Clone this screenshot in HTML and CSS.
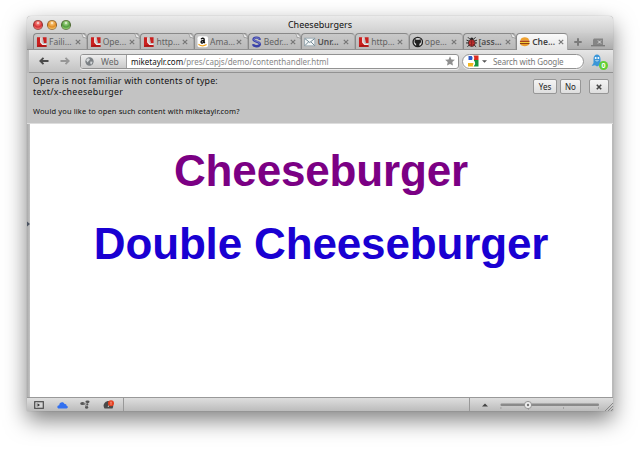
FILE: index.html
```html
<!DOCTYPE html>
<html lang="en">
<head>
<meta charset="utf-8">
<title>Cheeseburgers</title>
<link rel="stylesheet" href="styles.css">
</head>
<body>
<svg width="0" height="0" class="defs">
  <symbol id="opera" viewBox="0 0 12 12"><path fill="#c9201f" d="M1 1h4.300v5l1.500 2.300H11V11H1z"/><path fill="#c9201f" d="M7 1h4v6H8.300z"/><path fill="#f2eeee" d="M4.300 1h1.400v5l1.800 2.200H11v1H6.600L4.300 6.500z"/><path fill="#a81010" d="M1 10l4-1 6 1v1H1z"/></symbol>
  <symbol id="close" viewBox="0 0 6 6"><path d="M.8.8l4.400 4.400M5.200.8L.8 5.200" stroke="#777" stroke-width="1.200"/></symbol>
  <symbol id="curl" viewBox="0 0 6 6"><path d="M.5.500C3 .5 5.500 3 5.500 5.500L3.800 4.500 2.200 4.600 1.800 2.800z" fill="#f3f3f3" stroke="#888" stroke-width=".7"/></symbol>
</svg>
<div class="window">
  <header class="title">
    <div class="lights"><i class="red"></i><i class="amber"></i><i class="green"></i></div>
    <span>Cheeseburgers</span>
  </header>
  <nav class="tabs">
    <div class="tab"><svg class="fav"><use href="#opera"/></svg><span>Faili...</span><svg class="x"><use href="#close"/></svg><svg class="curl"><use href="#curl"/></svg></div>
    <div class="tab"><svg class="fav"><use href="#opera"/></svg><span>Ope...</span><svg class="x"><use href="#close"/></svg><svg class="curl"><use href="#curl"/></svg></div>
    <div class="tab"><svg class="fav"><use href="#opera"/></svg><span>http...</span><svg class="x"><use href="#close"/></svg><svg class="curl"><use href="#curl"/></svg></div>
    <div class="tab"><svg class="fav" viewBox="0 0 12 12"><rect x=".5" width="11" height="11.500" rx="2" fill="#fff"/><path d="M4.300 3.200c.5-1.600 3.200-1.400 3.200.3v2.700l.6.900M7.300 4.400C3 4.400 3.800 7.800 6 7c.8-.3 1.300-1 1.300-2" fill="none" stroke="#111" stroke-width="1.400"/><path d="M1.500 8.300c2.500 2 6 2 8.500.4" fill="none" stroke="#f5a51c" stroke-width="1.300"/></svg><span>Ama...</span><svg class="x"><use href="#close"/></svg><svg class="curl"><use href="#curl"/></svg></div>
    <div class="tab"><svg class="fav" viewBox="0 0 12 12"><path d="M9.200 3.700C9 1 3 .5 2.600 3.300 2.300 6 9.400 5 9.300 8.300 9 11.300 2.500 11 2.300 8.200" fill="none" stroke="#3a42a8" stroke-width="2.400"/><path d="M9 3C8 1.200 3.300 1 3 3.300c0 2.400 6.500 1.700 6.200 4.700" fill="none" stroke="#b5b9ed" stroke-width=".5"/></svg><span>Bedr...</span><svg class="x"><use href="#close"/></svg><svg class="curl"><use href="#curl"/></svg></div>
    <div class="tab"><svg class="fav" viewBox="0 0 12 12"><rect x=".7" y="2" width="10.600" height="8" fill="#f4f7f8" stroke="#8fa1aa" stroke-width=".8"/><path d="M1 2.500l5 4 5-4M1 9.700L4.600 6M11 9.700L7.400 6" fill="none" stroke="#6e858f"/></svg><span class="unread">Unr...</span><svg class="x"><use href="#close"/></svg></div>
    <div class="tab"><svg class="fav"><use href="#opera"/></svg><span>http...</span><svg class="x"><use href="#close"/></svg></div>
    <div class="tab"><svg class="fav" viewBox="0 0 12 12"><circle cx="6" cy="6" r="4.900" fill="#ddd" stroke="#222" stroke-width="1.400"/><path d="M3 2.800l1.500.8h3L9 2.800l.4 2.700c0 1.500-1 2-1.700 2.200V11H4.300V7.700C3.600 7.500 2.600 7 2.600 5.500z" fill="#222"/></svg><span>ope...</span><svg class="x"><use href="#close"/></svg></div>
    <div class="tab"><svg class="fav" viewBox="0 0 12 12"><path d="M2 1l2 2M10 1L8 3M.5 4L3 5M11.500 4L9 5M0 7h3M12 7H9M1.500 11l2-2M10.500 11l-2-2" stroke="#222"/><circle cx="6" cy="3" r="1.800" fill="#222"/><ellipse cx="6" cy="7" rx="3.500" ry="3.700" fill="#cf3434" stroke="#222" stroke-width=".7"/><path d="M6 4v6.500M4.300 5.500v1M7.700 5.500v1M4.300 8v1M7.700 8v1" stroke="#411" stroke-width=".7"/></svg><span class="unread">[ass...</span><svg class="x"><use href="#close"/></svg><svg class="curl"><use href="#curl"/></svg></div>
    <div class="tab active"><svg class="fav" viewBox="0 0 12 12"><path d="M1.500 4.600C1.500 0 10.500 0 10.500 4.600z" fill="#eea02e"/><path d="M1 5.300h10" stroke="#a33212" stroke-width="1.300"/><path d="M1 6.500h10" stroke="#f7d22c"/><path d="M1 7.600h10" stroke="#8c3e14" stroke-width="1.200"/><path d="M1.500 8.200h9c0 3-9 3-9 0z" fill="#e99a2b"/></svg><span>Che...</span><svg class="x"><use href="#close"/></svg></div>
    <svg class="plus" viewBox="0 0 8 8"><path d="M4 .3v7.400M.3 4h7.400" stroke="#7b7b7b" stroke-width="2"/></svg>
    <svg class="trash" viewBox="0 0 14 9"><path d="M3 .5h9V7H2V1.500z" fill="#858585"/><path d="M0 7.700h14" stroke="#7b7b7b" stroke-width="1.400"/><path d="M7 2.500l3 3M10 2.500l-3 3" stroke="#ddd"/></svg>
  </nav>
  <div class="toolbar">
    <svg class="back" viewBox="0 0 10 8"><path d="M4.500.8L1.300 4l3.200 3.200M1.500 4H9.500" fill="none" stroke="#4b4b4b" stroke-width="1.800"/></svg>
    <svg class="forward" viewBox="0 0 10 8"><path d="M5.500.8L8.700 4 5.500 7.200M8.500 4H.5" fill="none" stroke="#979797" stroke-width="1.800"/></svg>
    <div class="address">
      <div class="web"><svg viewBox="0 0 10 10"><circle cx="5" cy="5" r="4.600" fill="#7b8084"/><path d="M2 2l2.500-.5 1 1.500L4 4.500 3 6 1.300 4zM6 5l2.500.3L7 8.500 5.800 7z" fill="#d5d8da"/></svg><span>Web</span></div>
      <div class="url"><b>miketaylr.com</b>/pres/capjs/demo/contenthandler.html</div>
      <svg class="star" viewBox="0 0 10 10"><path d="M5 .2l1.400 3.200 3.500.4-2.600 2.300.7 3.500L5 7.900 2 9.600l.7-3.500L.1 3.800l3.500-.4z" fill="#8f8f8f"/></svg>
    </div>
    <div class="search">
      <svg class="google" viewBox="0 0 12 12"><path d="M1.500 1h4v4h-4z" fill="#2d58c6"/><path d="M6.500.5h5V5h-5z" fill="#d92b20"/><path d="M7 5h4.500v6.500H7z" fill="#15953c"/><path d="M1 8h5.500v3.500H1z" fill="#f2b51b"/><path d="M5 1c2.800 1 1.600 3 .6 4.300C8.300 7 8 9.500 6 10.800" fill="none" stroke="#fff" stroke-width="1.200"/></svg>
      <svg class="caret" viewBox="0 0 6 3"><path d="M0 0h6L3 3z" fill="#555"/></svg>
      <span>Search with Google</span>
    </div>
    <div class="ghost"><svg viewBox="0 0 12 13"><path d="M2.500 5c0-6 7-6 7 0v4l1.500 3-2.500-.8L6 12.500l-2-1.300-3.300.8L2.500 9z" fill="#3b96d8"/><circle cx="4.700" cy="4" r="1" fill="#fff"/><circle cx="7.400" cy="4" r="1" fill="#fff"/><path d="M4.500 6.500q1.500 1 3 0" fill="none" stroke="#fff" stroke-width=".7"/></svg><em>0</em></div>
  </div>
  <section class="infobar">
    <div class="message"><p class="lead">Opera is not familiar with contents of type:</p><p class="type">text/x-cheeseburger</p><p class="ask">Would you like to open such content with miketaylr.com?</p></div>
    <div class="actions"><button class="yes">Yes</button><button class="no">No</button><button class="dismiss"><svg viewBox="0 0 6 6"><path d="M.8.800l4.400 4.400M5.200.8L.8 5.200" stroke="#444" stroke-width="1.600"/></svg></button></div>
  </section>
  <main>
    <div class="panel-edge"><svg viewBox="0 0 3 6"><path d="M0 .5L3 3 0 5.500z" fill="#4c5462"/></svg></div>
    <div class="page"><h1 class="visited">Cheeseburger</h1><h1 class="link">Double Cheeseburger</h1></div>
  </main>
  <footer>
    <div class="tools">
      <svg class="panel" viewBox="0 0 10 8"><rect x=".7" y=".7" width="8.600" height="6.600" fill="#d5d5d5" stroke="#4c4c4c" stroke-width="1.200"/><path d="M2.500 1v6" stroke="#bbb"/><path d="M3.500 2.200L6 4 3.500 5.800z" fill="#333"/></svg>
      <svg class="cloud" viewBox="0 0 11 8"><path d="M2 7.500C-.5 7.500 0 4 2.300 4.200 2 .5 7 .3 7.500 3 9.500 2.600 9.700 4.500 9.500 4.700c2 .3 1.500 2.800 0 2.800z" fill="#3270f0"/></svg>
      <svg class="unite" viewBox="0 0 10 9"><g fill="#555"><ellipse cx="2.500" cy="3.400" rx="2.300" ry="1.500"/><ellipse cx="7.500" cy="1.800" rx="2.100" ry="1.400"/><circle cx="7.300" cy="4.400" r="1.100"/><ellipse cx="6.600" cy="7.300" rx="1.600" ry="1.500"/></g><path d="M3 3.500l2 1L7 2M5 4.500l1.500 2.500" fill="none" stroke="#777" stroke-width=".7"/></svg>
      <svg class="turbo" viewBox="0 0 11 9"><path d="M1.500 8.500C-1 5 2 1 5.500 1s6 4 4 7.500z" fill="#494949"/><path d="M5 7l2-3" stroke="#ccc"/><circle cx="8" cy="3.300" r="3" fill="#e64020"/><path d="M8 1.700v2M8 4.300v.8" stroke="#fff" stroke-width=".6"/></svg>
    </div>
    <div class="zoom">
      <svg class="up" viewBox="0 0 6 4"><path d="M0 3.500h6L3 .5z" fill="#444"/></svg>
      <svg class="slider" viewBox="0 0 100 10"><rect x=".5" y="2.500" width="98.500" height="2.500" rx="1" fill="#8a8a8a"/><path d="M.9 6v2M28.500 7v2M63.500 6v2M98.500 6v2" stroke="#999" stroke-width=".8"/><circle cx="28" cy="4" r="3.600" fill="#eee" stroke="#858585" stroke-width=".8"/><circle cx="28" cy="4" r="1.200" fill="#777"/></svg>
      <svg class="grip" viewBox="0 0 8 8"><path d="M0 8l8-8M3 8l5-5M6 8l2-2" stroke="#888"/></svg>
    </div>
  </footer>
</div>
</body>
</html>
```

FILE: styles.css
```css
* { box-sizing: border-box; }
body { margin: 0; width: 640px; height: 449px; padding: 16px 0 0 27px; overflow: hidden; background: #fff; font-family: "Noto Sans", sans-serif; font-size: 8px; color: #222; }
svg { display: block; flex: none; }
.defs { position: absolute; }
.window { width: 586px; height: 395px; display: flex; flex-direction: column; border-radius: 4px 4px 0 0; background: #bababa; box-shadow: 0 0 1px rgba(0,0,0,.35), 0 9px 22px rgba(0,0,0,.5); }
.title { height: 17px; flex: none; position: relative; text-align: center; line-height: 17px; font-size: 9px; border-radius: 4px 4px 0 0; background: linear-gradient(#eaeaea, #cfcfcf); color: #111; }
.lights { position: absolute; left: 6px; top: 4px; display: flex; gap: 4.500px; }
.lights i { width: 9.500px; height: 9.500px; border-radius: 50%; border: .8px solid rgba(75,55,45,.5); }
.red { background: radial-gradient(circle at 50% 25%, #fff 0, #f27770 22%, #d63035 55%, #ff9d94); }
.amber { background: radial-gradient(circle at 50% 25%, #fff 0, #f5bc68 22%, #e28c25 55%, #ffe591); }
.green { background: radial-gradient(circle at 50% 25%, #fff 0, #95cc79 22%, #529c3e 55%, #baf08c); }
.tabs { height: 17px; flex: none; padding-left: 6px; display: flex; background: linear-gradient(#cdcdcd, #acacac); border-bottom: 1px solid #929292; }
.tab { width: 53.700px; height: 16px; position: relative; flex: none; display: flex; align-items: center; padding-left: 2px; border: 1px solid #898989; border-bottom: 0; border-right-color: #aaa; border-radius: 4px 4px 0 0; background: linear-gradient(#c9c9c9, #b9b9b9); color: #626262; font-size: 8.500px; }
.tab .fav { width: 11.500px; height: 12px; }
.tab span { width: 25.500px; margin-left: 1.500px; white-space: nowrap; line-height: 16px; }
.tab .x { width: 6px; height: 6px; margin-left: .5px; }
.tab .curl { position: absolute; right: -1px; top: -1px; width: 6px; height: 6px; }
.tab .unread { font-weight: 600; color: #505050; }
.tab.active { width: 52px; height: 17px; background: linear-gradient(#fafafa, #e5e5e5); color: #444; font-weight: 600; z-index: 1; }
.plus { width: 8px; height: 8px; margin: 5px 0 0 6px; }
.trash { width: 14px; height: 9px; margin: 5px 0 0 9px; }
.toolbar { height: 23px; flex: none; display: flex; align-items: center; background: linear-gradient(#e6e6e6, #c3c3c3); border-bottom: 1px solid #929292; margin-left: 2px; padding-left: 10px; }
.back, .forward { width: 10px; height: 8px; }
.forward { margin-left: 11px; }
.address { width: 379px; height: 15px; margin-left: 10px; display: flex; align-items: center; background: #fff; border: 1px solid #929292; border-radius: 3px; box-shadow: 0 1px #eee; }
.web { width: 46px; height: 13px; display: flex; align-items: center; padding-left: 4px; border-right: 1px solid #a0a0a0; background: linear-gradient(#ededed, #cacaca); font-size: 8.500px; color: #666; border-radius: 2px 0 0 2px; }
.web svg { width: 9px; height: 9px; margin-right: 7px; }
.url { flex: 1; padding-left: 4px; font-size: 8px; color: #888; white-space: nowrap; }
.url b { font-weight: 400; color: #111; }
.star { width: 10px; height: 10px; margin-right: 3px; }
.search { width: 122px; height: 15px; margin-left: 3px; border: 1px solid #929292; border-radius: 8px; background: #fff; display: flex; align-items: center; padding-left: 4px; color: #777; font-size: 8px; letter-spacing: -.12px; box-shadow: 0 1px #eee; white-space: nowrap; }
.google { width: 12px; height: 12px; }
.caret { width: 5px; height: 3px; margin: 0 6px 0 3px; }
.ghost { position: relative; margin-left: 7px; width: 17px; height: 15px; }
.ghost svg { width: 12px; height: 13px; }
.ghost em { position: absolute; right: 0; bottom: -1px; width: 9px; height: 9px; border-radius: 50%; background: #61cf35; color: #fff; font: bold 7px/9px "Noto Sans", sans-serif; text-align: center; }
.infobar { height: 51px; flex: none; display: flex; justify-content: space-between; background: #c3c3c3; border-bottom: 1px solid #ddd; padding: 3px 4px 0 6px; color: #111; }
.message p { margin: 0; white-space: nowrap; }
.lead, .type { font-size: 8.800px; line-height: 11px; letter-spacing: .2px; }
.type { letter-spacing: .35px; }
.ask { font-size: 7.500px; line-height: 10px; padding-top: 7.500px; letter-spacing: .13px; }
.actions { display: flex; padding-top: 3px; }
button { height: 15px; padding: 0; border: 1px solid #969696; border-radius: 2px; background: linear-gradient(#f4f4f4, #dedede); font: 8px/12px "Noto Sans", sans-serif; color: #222; }
.yes { width: 24px; margin-right: 3px; }
.no { width: 21px; margin-right: 8px; }
.dismiss { width: 20px; display: flex; align-items: center; justify-content: center; }
.dismiss svg { width: 6px; height: 6px; }
main { height: 273px; flex: none; display: flex; padding-right: 1px; }
.panel-edge { width: 3px; display: flex; align-items: center; background: linear-gradient(90deg, #aaa, #c4c4c4); padding-bottom: 73px; }
.panel-edge svg { width: 3px; height: 6px; }
.page { flex: 1; background: #fff; text-align: center; padding-top: 10px; }
h1 { margin: 0; font: bold 44px/73px "Liberation Sans", sans-serif; letter-spacing: -.15px; white-space: nowrap; }
.visited { color: #7b0084; }
.link { color: #1900d2; }
footer { height: 14px; flex: none; display: flex; justify-content: space-between; border-top: 1px solid #999; background: linear-gradient(#dedede, #bcbcbc); }
.tools { width: 97px; display: flex; align-items: center; padding-left: 7px; border-right: 1px solid #999; }
.panel { width: 10px; height: 8px; }
.cloud { width: 11px; height: 8px; margin-left: 13px; }
.unite { width: 10px; height: 9px; margin-left: 12px; }
.turbo { width: 11px; height: 9px; margin-left: 13px; }
.zoom { width: 144px; display: flex; align-items: center; border-left: 1px solid #999; }
.up { width: 6px; height: 4px; margin-left: 12px; }
.slider { width: 100px; height: 10px; margin: 2px 0 0 12px; }
.grip { width: 8px; height: 8px; margin: 4px 0 0 5px; }
```
